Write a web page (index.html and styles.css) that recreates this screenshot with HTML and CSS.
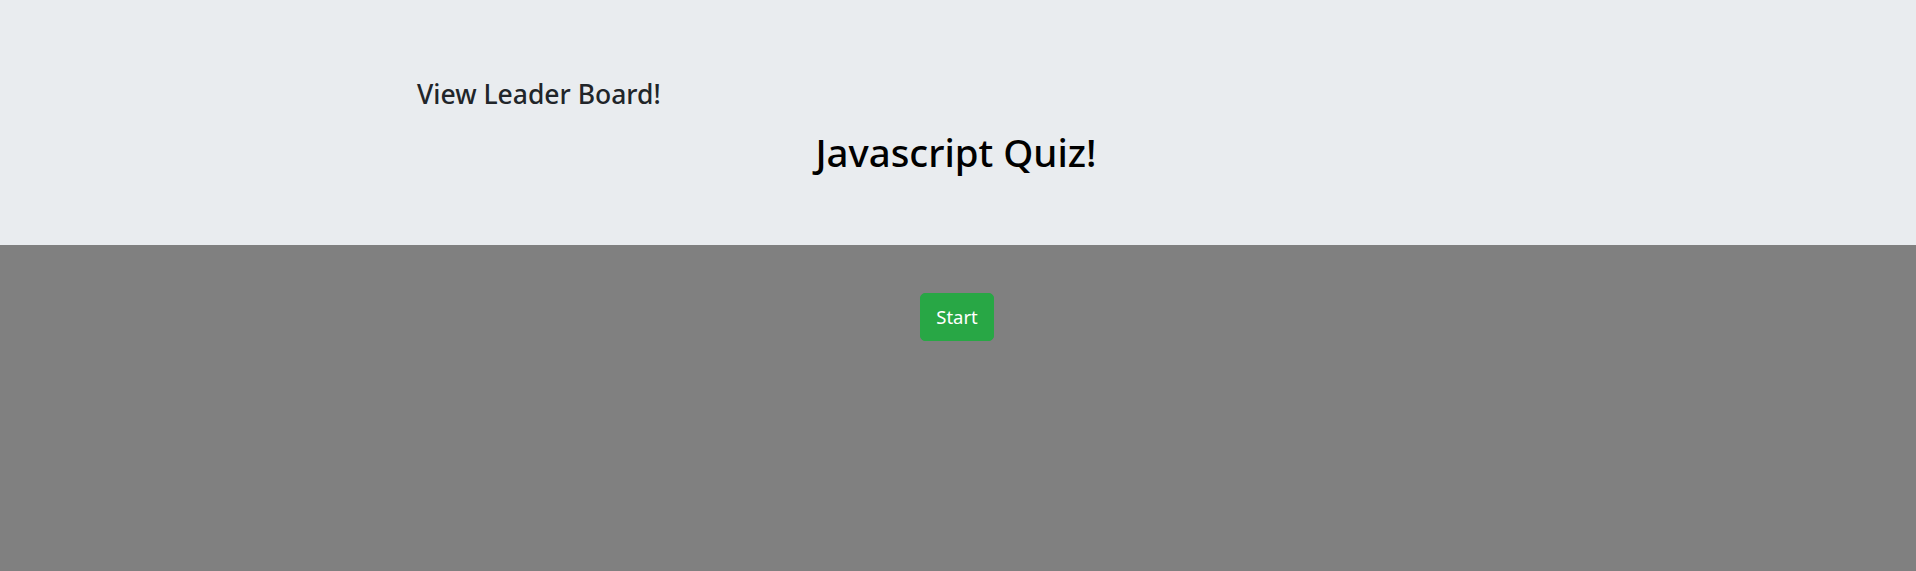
FILE: index.html
```html
<!DOCTYPE html>
<html lang="en">
<head>
<meta charset="utf-8">
<title>Javascript Quiz</title>
<link rel="stylesheet" href="styles.css">
</head>
<body>
<header class="jumbotron">
  <div class="container">
    <a class="leader-link" href="#">View Leader Board!</a>
  </div>
  <h1 class="title">Javascript Quiz!</h1>
</header>
<main class="main">
  <button class="btn-start" type="button">Start</button>
</main>
</body>
</html>
```

FILE: styles.css
```css
html, body {
  margin: 0;
  padding: 0;
}
body {
  background: #808080;
  font-family: "Noto Sans", "Open Sans", sans-serif;
  color: #212529;
  min-height: 571px;
}
.jumbotron {
  background: #e9ecef;
  height: 245px;
  box-sizing: border-box;
  padding-top: 78px;
  display: flex;
  flex-direction: column;
}
.container {
  padding-left: 417px;
}
.leader-link {
  display: inline-block;
  font-size: 26.5px;
  line-height: 32px;
  font-weight: 500;
  color: #212529;
  text-decoration: none;
}
.title {
  margin: 18px 4px 0 0;
  text-align: center;
  font-size: 38.4px;
  line-height: 48px;
  font-weight: 500;
  color: #000;
}
.main {
  display: flex;
  justify-content: center;
  padding: 48px 2px 0 0;
}
.btn-start {
  font-family: inherit;
  font-size: 18.5px;
  line-height: 30px;
  padding: 8px 15.5px;
  height: 48px;
  box-sizing: border-box;
  border: 1px solid #28a745;
  background: #28a745;
  color: #fff;
  border-radius: 5px;
  cursor: pointer;
}
```
